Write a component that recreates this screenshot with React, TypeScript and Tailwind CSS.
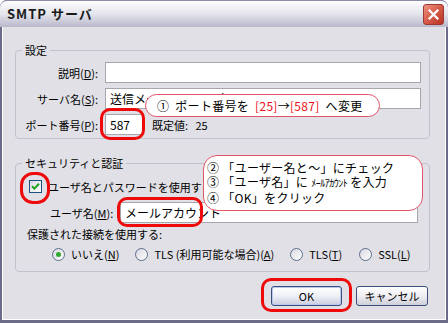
import React from "react";

const font = { fontFamily: '"Noto Sans CJK JP", "Noto Sans", sans-serif' };

function Key({ k }: { k: string }) {
  return (
    <>
      (<u>{k}</u>)
    </>
  );
}

function Field({ label, k, children }: { label: string; k: string; children: React.ReactNode }) {
  return (
    <div className="flex h-[21px] items-center">
      <label className="w-[82px] shrink-0 whitespace-nowrap text-right">
        {label}
        <Key k={k} />:
      </label>
      <div className="ml-[7px] flex flex-1 items-center">{children}</div>
    </div>
  );
}

function Input({ value, className = "" }: { value?: string; className?: string }) {
  return (
    <div className={`flex h-[21px] items-center whitespace-nowrap border border-[#a7a6aa] bg-white px-[4px] text-[12px] ${className}`}>
      {value}
    </div>
  );
}

function Radio({ checked, children }: { checked?: boolean; children: React.ReactNode }) {
  return (
    <div className="flex items-center gap-[6px] whitespace-nowrap">
      <span className="flex h-[13px] w-[13px] shrink-0 items-center justify-center rounded-full border border-[#5a6f8c] bg-gradient-to-br from-[#d8d8e0] to-white">
        {checked && <span className="h-[5px] w-[5px] rounded-full bg-[#2fa82f]" />}
      </span>
      <span>{children}</span>
    </div>
  );
}

function Ring({ className }: { className: string }) {
  return <div className={`pointer-events-none absolute rounded-[10px] border-[3px] border-[#ee0a0a] ${className}`} />;
}

export default function App() {
  return (
    <div
      style={font}
      className="relative flex h-[323px] w-[448px] flex-col overflow-hidden rounded-t-[7px] bg-[#6d6c88] px-[2px] pb-[3px] text-[11px] leading-[14px] text-black"
    >
      {/* title bar */}
      <div className="-mx-[2px] flex h-[27px] shrink-0 items-center justify-between rounded-t-[7px] border-t border-[#8e8da8] bg-gradient-to-b from-[#fdfdfe] via-[#e4e4ec] to-[#b9b8cc] pl-[7px] pr-[4px]">
        <span className="text-[13px] font-bold tracking-[1px] text-[#1a1a1a]">SMTP サーバ</span>
        <button className="flex h-[21px] w-[21px] items-center justify-center rounded-[3px] border border-[#9b3a30] bg-gradient-to-br from-[#f09282] via-[#d65a48] to-[#b8321f]">
          <svg width="11" height="11" viewBox="0 0 11 11">
            <path d="M1.5 1.5 L9.5 9.5 M9.5 1.5 L1.5 9.5" stroke="white" strokeWidth="2.2" strokeLinecap="square" />
          </svg>
        </button>
      </div>

      {/* body */}
      <div className="flex flex-1 flex-col border-x border-b border-white bg-[#e1e0e6] pl-[12px] pr-[15px] pt-[16px]">
        <fieldset className="rounded-[4px] border border-[#c3c2cc] pb-[3px] pt-[5px]">
          <legend className="ml-[6px] px-[3px] leading-[14px]">設定</legend>
          <div className="flex flex-col gap-[5px] pr-[8px]">
            <Field label="説明" k="D">
              <Input className="flex-1" />
            </Field>
            <Field label="サーバ名" k="S">
              <Input className="flex-1" value="送信メールサーバー名" />
            </Field>
            <Field label="ポート番号" k="P">
              <Input className="w-[38px]" value="587" />
              <span className="ml-[9px] whitespace-nowrap">既定値:&nbsp;&nbsp; 25</span>
            </Field>
          </div>
        </fieldset>

        <fieldset className="mt-[17px] rounded-[4px] border border-[#c3c2cc] pb-[10px]">
          <legend className="ml-[6px] px-[3px] leading-[14px]">セキュリティと認証</legend>
          <div className="mt-[10px] flex h-[13px] items-center pl-[13px]">
            <span className="flex h-[13px] w-[13px] items-center justify-center border border-[#1c5180] bg-gradient-to-br from-[#d8d8e0] to-white">
              <svg width="9" height="9" viewBox="0 0 9 9">
                <path d="M1 4.2 L3.4 6.6 L8 1.8" stroke="#21a121" strokeWidth="2" fill="none" />
              </svg>
            </span>
            <span className="ml-[6px] whitespace-nowrap">
              ユーザ名とパスワードを使用する(<u>U</u>)
            </span>
          </div>
          <div className="mt-[9px] flex h-[21px] items-center pl-[34px] pr-[11px]">
            <span className="w-[70px] shrink-0 whitespace-nowrap">
              ユーザ名<Key k="M" />:
            </span>
            <Input className="flex-1" value="メールアカウント" />
          </div>
          <div className="mt-[4px] pl-[11px]">保護された接続を使用する:</div>
          <div className="mt-[6px] flex items-center pl-[36px]">
            <Radio checked>
              いいえ<Key k="N" />
            </Radio>
            <div className="ml-[16px]">
              <Radio>
                TLS (利用可能な場合)<Key k="A" />
              </Radio>
            </div>
            <div className="ml-[16px]">
              <Radio>
                TLS<Key k="T" />
              </Radio>
            </div>
            <div className="ml-[17px]">
              <Radio>
                SSL<Key k="L" />
              </Radio>
            </div>
          </div>
        </fieldset>

        <div className="mt-[14px] flex justify-end gap-[14px] pr-[2px]">
          <button className="h-[20px] w-[71px] rounded-[3px] border border-[#3c4f7a] bg-gradient-to-b from-white via-[#eef0f6] to-[#c9cde0] shadow-[inset_0_0_0_1px_#b8c8ee]">
            OK
          </button>
          <button className="h-[20px] w-[72px] rounded-[3px] border border-[#3c4f7a] bg-gradient-to-b from-white via-[#eeeef2] to-[#cfcfda]">
            キャンセル
          </button>
        </div>
      </div>

      {/* annotations */}
      <Ring className="left-[100px] top-[108px] h-[32px] w-[45px]" />
      <Ring className="left-[20px] top-[172px] h-[32px] w-[30px] rounded-[13px]" />
      <Ring className="left-[117px] top-[197px] h-[30px] w-[86px]" />
      <Ring className="left-[261px] top-[278px] h-[34px] w-[91px]" />

      <div className="absolute left-[145px] top-[94px] flex h-[23px] w-[235px] items-center whitespace-nowrap rounded-full border-[1.5px] border-[#e2566a] bg-white pl-[11px] text-[12px] tracking-[0.3px]">
        ①&nbsp;&nbsp;ポート番号を&nbsp;&nbsp;<span className="text-[#e8101a]">[25]</span>→<span className="text-[#e8101a]">[587]</span>&nbsp;&nbsp;へ変更
      </div>

      <div className="absolute left-[203px] top-[155px] flex h-[56px] w-[220px] flex-col justify-center whitespace-nowrap rounded-[14px] border-[1.5px] border-[#e2566a] bg-white pl-[3px] text-[12px] leading-[14.5px] tracking-[0.3px]">
        <div>②&nbsp;「ユーザー名と～」にチェック</div>
        <div>
          ③&nbsp;「ユーザ名」に <span className="text-[10px] tracking-[-0.5px]">ﾒｰﾙｱｶｳﾝﾄ</span> を入力
        </div>
        <div>④&nbsp;「OK」をクリック</div>
      </div>
    </div>
  );
}
